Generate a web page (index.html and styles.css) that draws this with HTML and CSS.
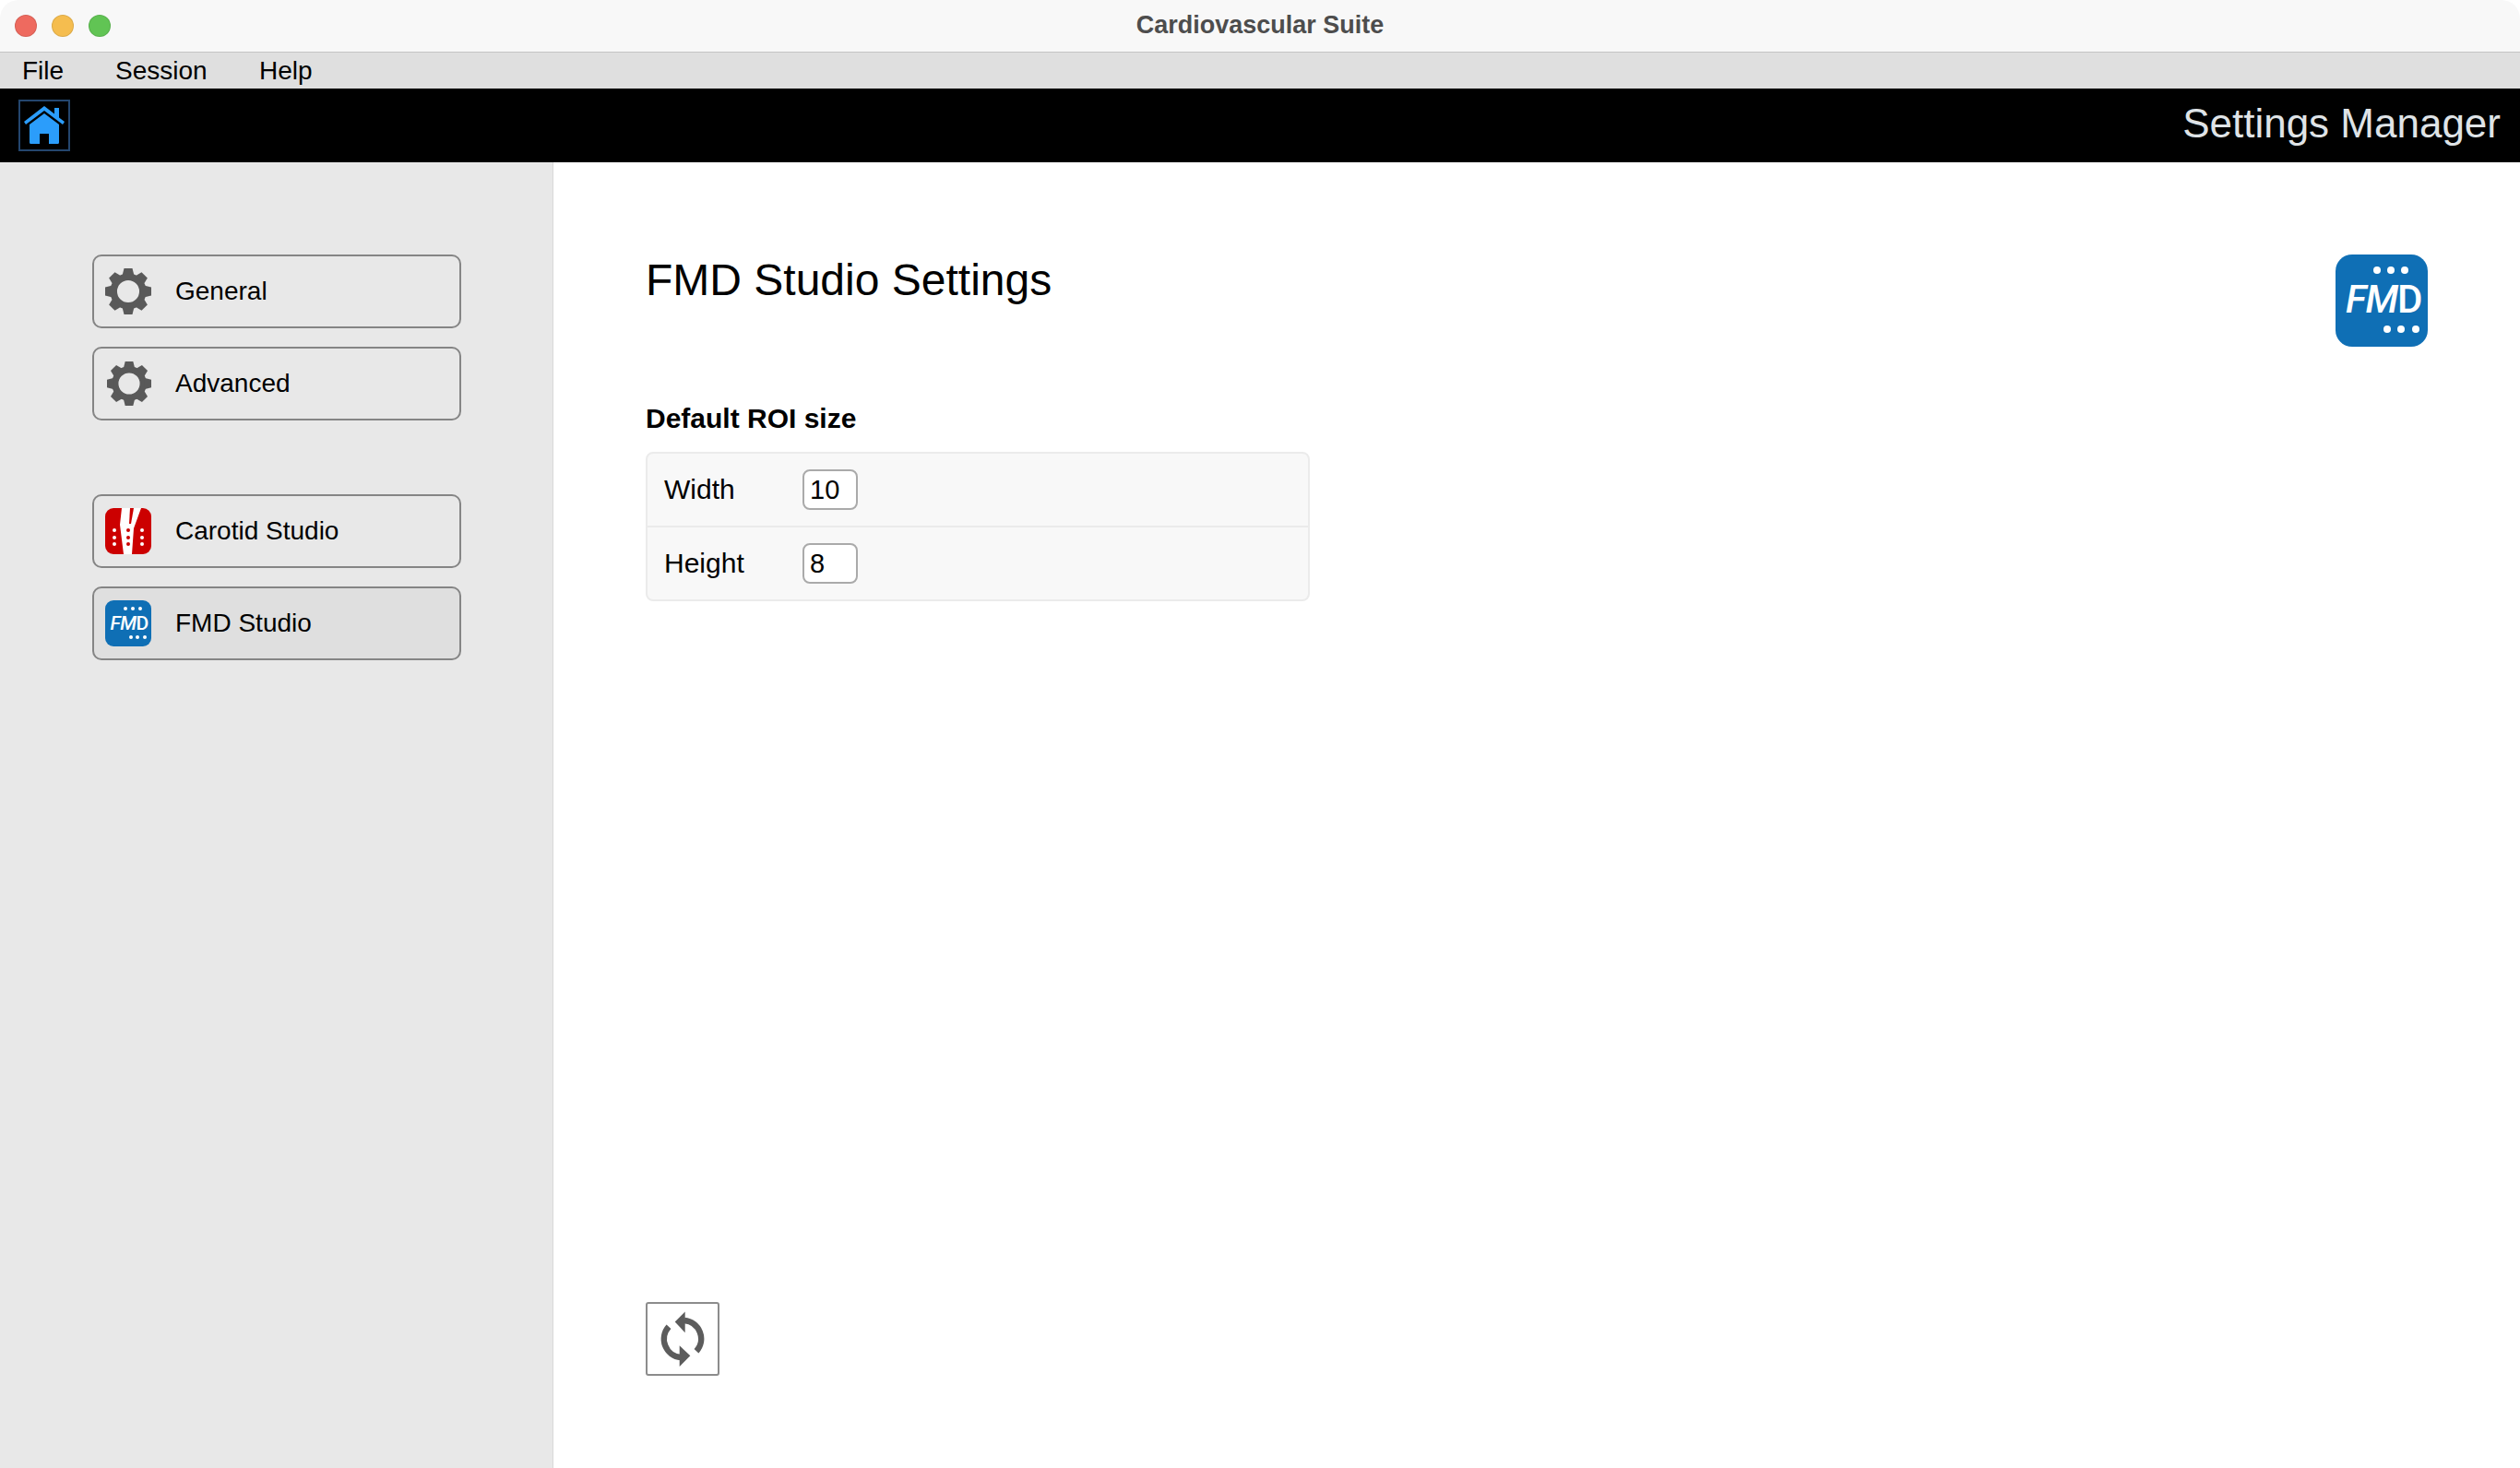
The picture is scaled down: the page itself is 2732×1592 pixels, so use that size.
FILE: index.html
```html
<!DOCTYPE html>
<html lang="en">
<head>
<meta charset="utf-8">
<title>Cardiovascular Suite</title>
<link rel="stylesheet" href="styles.css">
</head>
<body>
<div class="window">
  <header class="titlebar">
    <div class="lights"><span class="light red"></span><span class="light yellow"></span><span class="light green"></span></div>
    <div class="wintitle">Cardiovascular Suite</div>
  </header>
  <nav class="menubar"><span class="m1">File</span><span class="m2">Session</span><span class="m3">Help</span></nav>
  <div class="blackbar">
    <div class="homebtn">
      <svg width="44" height="44" viewBox="0 0 44 44"><path fill="#2b9dfb" d="M22 1 33 9.500V3H38V13.400L44 18 42 21 22 6 2 21 0 18Z"/><path fill="#2b9dfb" d="M22 9 38 21V40.500Q38 42 36.500 42H27V31H17V42H7.500Q6 42 6 40.500V21Z"/></svg>
    </div>
    <div class="appname">Settings Manager</div>
  </div>
  <div class="main">
    <aside class="sidebar">
      <div class="navgroup">
        <div class="navbtn">
          <svg class="gear" width="50" height="50" viewBox="0 0 50 50"><use href="#gear"/></svg>
          <span>General</span>
        </div>
        <div class="navbtn">
          <svg class="gear g2" width="48" height="48" viewBox="0 0 50 50"><use href="#gear"/></svg>
          <span>Advanced</span>
        </div>
      </div>
      <div class="navgroup">
        <div class="navbtn">
          <svg class="appicon" width="50" height="50" viewBox="0 0 50 50">
            <rect width="50" height="50" rx="9" fill="#cc0000"/>
            <path fill="#fff" d="M18 0H39L31 22 29 50H20L16 18Z"/>
            <path fill="#cc0000" d="M27 0H31L28 17H26Z"/>
            <g fill="#cc0000"><circle cx="25" cy="24" r="2"/><circle cx="25" cy="32" r="2"/><circle cx="25" cy="39" r="2"/></g>
            <g fill="#fff"><circle cx="10" cy="24" r="2"/><circle cx="10" cy="32" r="2"/><circle cx="10" cy="39" r="2"/><circle cx="40" cy="24" r="2"/><circle cx="40" cy="32" r="2"/><circle cx="40" cy="39" r="2"/></g>
          </svg>
          <span>Carotid Studio</span>
        </div>
        <div class="navbtn active">
          <svg class="appicon" width="50" height="50" viewBox="0 0 50 50">
            <rect width="50" height="50" rx="9" fill="#0f6fb5"/>
            <g fill="#fff"><circle cx="22" cy="9" r="2"/><circle cx="30" cy="9" r="2"/><circle cx="38" cy="9" r="2"/><circle cx="28" cy="40" r="2"/><circle cx="35" cy="40" r="2"/><circle cx="43" cy="40" r="2"/></g>
            <text x="5.500" y="31.500" class="fmdsmall">FM<tspan class="upright">D</tspan></text>
          </svg>
          <span>FMD Studio</span>
        </div>
      </div>
    </aside>
    <section class="content">
      <div class="contenthead">
        <h1>FMD Studio Settings</h1>
        <svg class="biglogo" width="100" height="100" viewBox="0 0 100 100">
          <rect width="100" height="100" rx="18" fill="#0f6fb5"/>
          <g fill="#fff"><circle cx="45" cy="17" r="4"/><circle cx="60" cy="17" r="4"/><circle cx="75" cy="17" r="4"/><circle cx="56" cy="81" r="4"/><circle cx="71" cy="81" r="4"/><circle cx="87" cy="81" r="4"/></g>
          <text x="11" y="63" class="fmdbig">FM<tspan class="upright">D</tspan></text>
        </svg>
      </div>
      <h2>Default ROI size</h2>
      <div class="panel">
        <div class="row"><label>Width</label><div class="field">10</div></div>
        <div class="row"><label>Height</label><div class="field">8</div></div>
      </div>
      <div class="spacer"></div>
      <div class="refresh">
        <svg width="50" height="64" viewBox="0 0 50 64">
          <path fill="none" stroke="#5c5c5c" stroke-width="6.500" d="M27 12A20 20 0 0 1 40 45.300"/>
          <path fill="#5c5c5c" d="M16.700 13.600 27.700 2.600V25.300Z"/>
          <path fill="none" stroke="#5c5c5c" stroke-width="6.500" d="M10 18.700A20 20 0 0 0 23 52"/>
          <path fill="#5c5c5c" d="M33.300 50.300 21.700 39.300V62Z"/>
        </svg>
      </div>
    </section>
  </div>
</div>
<svg class="defs" width="0" height="0">
  <defs>
    <g id="gear" fill="#595959">
      <circle cx="25" cy="25" r="15.800" fill="none" stroke="#595959" stroke-width="7.500"/>
      <path id="tooth" d="M20.500 0H29.500L31.500 8H18.500Z"/>
      <path d="M20.500 0H29.500L31.500 8H18.500Z" transform="rotate(45 25 25)"/>
      <path d="M20.500 0H29.500L31.500 8H18.500Z" transform="rotate(90 25 25)"/>
      <path d="M20.500 0H29.500L31.500 8H18.500Z" transform="rotate(135 25 25)"/>
      <path d="M20.500 0H29.500L31.500 8H18.500Z" transform="rotate(180 25 25)"/>
      <path d="M20.500 0H29.500L31.500 8H18.500Z" transform="rotate(225 25 25)"/>
      <path d="M20.500 0H29.500L31.500 8H18.500Z" transform="rotate(270 25 25)"/>
      <path d="M20.500 0H29.500L31.500 8H18.500Z" transform="rotate(315 25 25)"/>
    </g>
  </defs>
</svg>
</body>
</html>
```
FILE: styles.css
```css
* { box-sizing: border-box; }
html, body { margin: 0; height: 100%; }
body { font-family: "Liberation Sans", Arial, sans-serif; color: #000; background: #fff; overflow: hidden; }
.window { width: 2732px; height: 1592px; display: flex; flex-direction: column; }
.titlebar { height: 57px; flex: none; position: relative; display: flex; align-items: center; justify-content: center; background: #f8f8f8; border-bottom: 1px solid #c4c4c4; border-radius: 20px 20px 0 0; }
.lights { position: absolute; left: 16px; top: 16px; display: flex; gap: 16px; }
.light { width: 24px; height: 24px; border-radius: 50%; border: 1px solid rgba(0,0,0,.1); }
.red { background: #ee6a5f; }
.yellow { background: #f5bd4f; }
.green { background: #61c454; }
.wintitle { font-size: 27px; font-weight: 700; color: #4d4d4d; padding-bottom: 2px; }
.menubar { height: 39px; flex: none; background: #dfdfdf; display: flex; align-items: center; font-size: 28px; padding-left: 24px; }
.m1 { width: 101px; }
.m2 { width: 156px; }
.blackbar { height: 80px; flex: none; background: #000; display: flex; align-items: center; justify-content: space-between; padding: 0 21px 0 20px; }
.homebtn { width: 56px; height: 56px; border: 2px solid #24466e; display: flex; align-items: center; justify-content: center; }
.appname { font-size: 44px; color: #dfe3e6; padding-bottom: 4px; }
.main { flex: 1; display: flex; min-height: 0; }
.sidebar { width: 600px; flex: none; background: #e8e8e8; border-right: 1px solid #d9d9d9; padding: 100px 0 0 100px; display: flex; flex-direction: column; gap: 80px; }
.navgroup { display: flex; flex-direction: column; gap: 20px; }
.navbtn { width: 400px; height: 80px; border: 2px solid #858585; border-radius: 10px; display: flex; align-items: center; gap: 26px; font-size: 28px; padding-left: 12px; }
.active { background: #dfdfdf; }
.g2 { margin-left: 2px; }
.fmdsmall { font-family: Roboto, sans-serif; font-size: 21px; font-weight: 500; font-style: italic; fill: #fff; letter-spacing: -.5px; }
.fmdbig { font-family: Roboto, sans-serif; font-size: 42px; font-weight: 500; font-style: italic; fill: #fff; letter-spacing: -1px; }
.upright { font-style: normal; }
.content { flex: 1; padding: 100px; display: flex; flex-direction: column; }
.contenthead { display: flex; justify-content: space-between; align-items: flex-start; }
h1 { margin: 2px 0 0; font-size: 48px; font-weight: 400; line-height: 52px; }
h2 { margin: 58px 0 0; font-size: 30px; font-weight: 700; line-height: 40px; }
.panel { width: 720px; margin-top: 16px; background: #f8f8f8; border: 2px solid #ebebeb; border-radius: 8px; }
.row { height: 78px; display: flex; align-items: center; padding-left: 18px; font-size: 30px; }
.row + .row { height: 80px; border-top: 2px solid #ebebeb; }
.row label { width: 150px; }
.field { width: 60px; height: 44px; background: #fff; border: 2px solid #aaa; border-radius: 8px; padding-left: 6px; line-height: 40px; font-size: 29px; }
.spacer { flex: 1; }
.refresh { width: 80px; height: 80px; border: 2px solid #8c8c8c; border-radius: 3px; display: flex; align-items: center; justify-content: center; }
.defs { position: absolute; }
```
